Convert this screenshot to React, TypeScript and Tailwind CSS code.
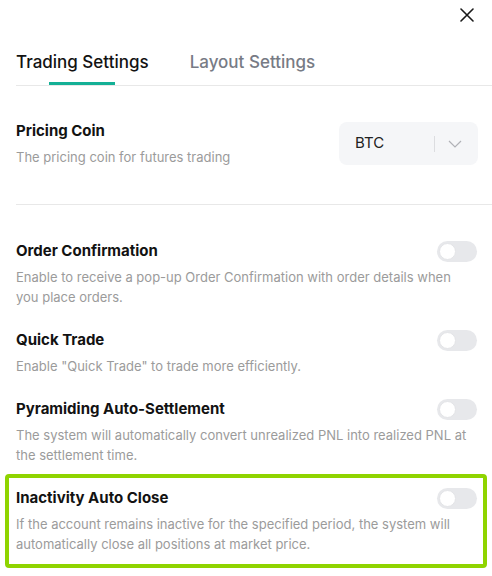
import { useState } from 'react';

type Item = {
    title: string;
    desc: string;
    highlight?: boolean;
};

const items: Item[] = [
    {
        title: 'Order Confirmation',
        desc: 'Enable to receive a pop-up Order Confirmation with order details when you place orders.',
    },
    {
        title: 'Quick Trade',
        desc: 'Enable "Quick Trade" to trade more efficiently.',
    },
    {
        title: 'Pyramiding Auto-Settlement',
        desc: 'The system will automatically convert unrealized PNL into realized PNL at the settlement time.',
    },
    {
        title: 'Inactivity Auto Close',
        desc: 'If the account remains inactive for the specified period, the system will automatically close all positions at market price.',
        highlight: true,
    },
];

function Toggle() {
    return (
        <div className="w-[40px] h-[21px] rounded-full bg-[#e7e8eb] flex items-center px-[2px] shrink-0">
            <div className="w-[17px] h-[17px] rounded-full bg-white border border-[#e3e4e7]" />
        </div>
    );
}

function SettingRow({ item }: { item: Item }) {
    return (
        <div>
            <div className="flex items-center justify-between h-[22px]">
                <span className="text-[15px] leading-[22px] font-bold text-[#121212]">{item.title}</span>
                <Toggle />
            </div>
            <p className="mt-[5px] text-[13px] leading-[20px] text-[#9b9b9b]">{item.desc}</p>
        </div>
    );
}

export default function App() {
    const [tab] = useState('trading');

    return (
        <div className="w-[492px] h-[576px] bg-white overflow-hidden font-['Inter',sans-serif]">
            {/* close */}
            <div className="h-[50px] flex justify-end items-start pt-[8px] pr-[18px]">
                <svg width="14" height="14" viewBox="0 0 14 14" className="text-[#1a1a1a]">
                    <path d="M1 1 L13 13 M13 1 L1 13" stroke="currentColor" strokeWidth="1.6" strokeLinecap="round" />
                </svg>
            </div>

            {/* tabs */}
            <div className="ml-4 flex gap-[41px] border-b border-[#e8e8e8]">
                <div className="relative pb-[11px]">
                    <span className={`text-[17px] leading-[24px] font-medium ${tab === 'trading' ? 'text-[#121212]' : 'text-[#777b85]'}`}>
                        Trading Settings
                    </span>
                    <div className="absolute bottom-0 left-1/2 -translate-x-1/2 w-[66px] h-[3px] bg-[#14b096]" />
                </div>
                <div className="pb-[11px]">
                    <span className="text-[17px] leading-[24px] font-medium text-[#777b85]">Layout Settings</span>
                </div>
            </div>

            {/* pricing coin */}
            <div className="ml-4 pr-[14px] pt-[34px] pb-[37px] border-b border-[#e8e8e8] flex items-center justify-between">
                <div>
                    <div className="text-[15px] leading-[22px] font-bold text-[#121212]">Pricing Coin</div>
                    <div className="mt-[5px] text-[13px] leading-[20px] text-[#9b9b9b]">The pricing coin for futures trading</div>
                </div>
                <div className="w-[139px] h-[43px] rounded-[8px] bg-[#f5f6f8] flex items-center pl-4 pr-[16px]">
                    <span className="flex-1 text-[15px] text-[#222]">BTC</span>
                    <div className="w-px h-[16px] bg-[#dcdde0]" />
                    <svg width="14" height="8" viewBox="0 0 14 8" className="ml-[13px] text-[#b0b2b7]">
                        <path d="M1 1 L7 7 L13 1" fill="none" stroke="currentColor" strokeWidth="1.2" />
                    </svg>
                </div>
            </div>

            {/* toggles */}
            <div className="ml-4 mr-[15px] pt-[35px]">
                {items.map((item, i) =>
                    item.highlight ? (
                        <div
                            key={item.title}
                            className="mt-[9px] -ml-[11px] -mr-[10px] border-4 border-[#8fd400] rounded-[4px] pl-[7px] pr-[6px] pt-[9px] pb-[10px]"
                        >
                            <SettingRow item={item} />
                        </div>
                    ) : (
                        <div key={item.title} className={i === 0 ? '' : 'mt-[22px]'}>
                            <SettingRow item={item} />
                        </div>
                    )
                )}
            </div>
        </div>
    );
}
